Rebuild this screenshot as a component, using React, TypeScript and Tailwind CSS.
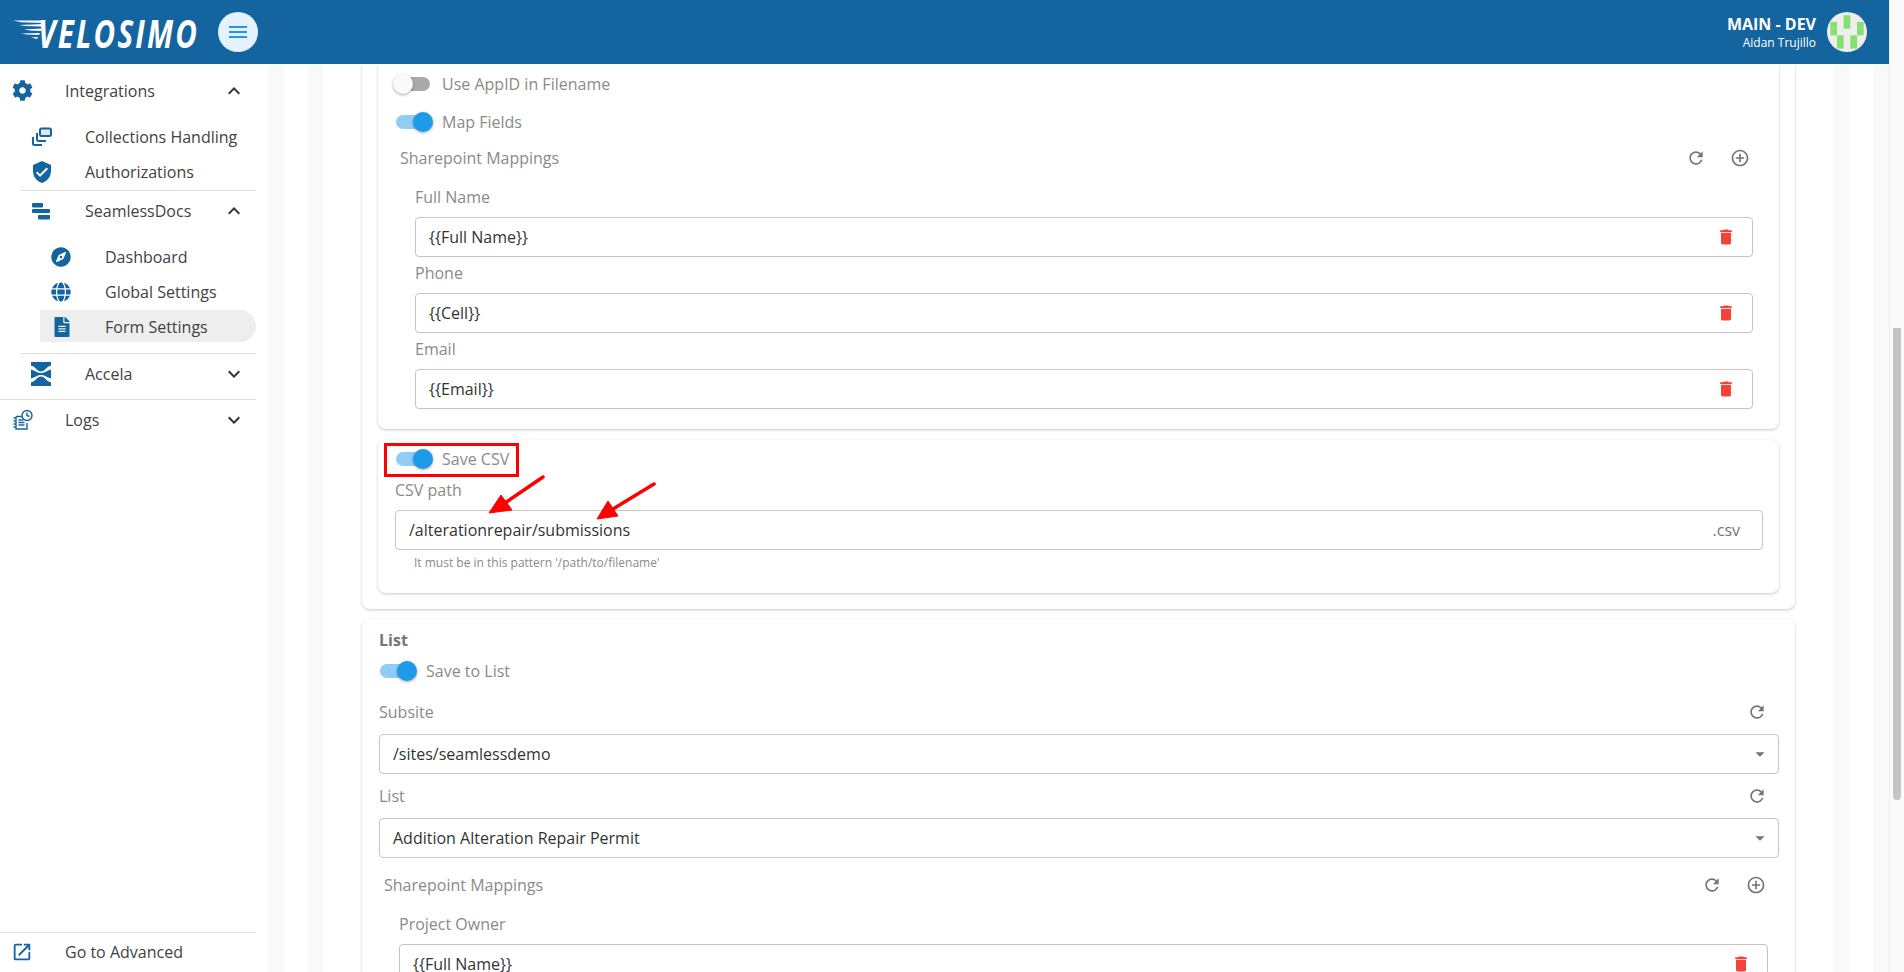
import type { ReactNode } from "react";
import { FaCog, FaCompass, FaFileAlt, FaGlobe } from "react-icons/fa";
import {
  MdAddCircleOutline,
  MdArrowDropDown,
  MdDelete,
  MdExpandLess,
  MdExpandMore,
  MdMenu,
  MdOpenInNew,
  MdRefresh,
  MdVerifiedUser,
} from "react-icons/md";

const blue = "text-[#14659f]";

function CollectionsIcon() {
  return (
    <svg width="22" height="20" viewBox="0 0 22 20" fill="none" stroke="currentColor" strokeWidth="2">
      <rect x="9" y="1.500" width="11" height="7.500" rx="1.500" fill="currentColor" fillOpacity="0.15" />
      <path d="M6 6v6.500a1.500 1.500 0 0 0 1.500 1.500H15" />
      <path d="M2 10v6.500A1.500 1.500 0 0 0 3.500 18H11" />
    </svg>
  );
}

function SeamlessIcon() {
  return (
    <svg width="20" height="20" viewBox="0 0 20 20" fill="currentColor">
      <rect x="1" y="2" width="11" height="4.500" rx="1" />
      <rect x="1" y="8" width="18" height="4" rx="1" />
      <rect x="7" y="14" width="12" height="4.500" rx="1" />
    </svg>
  );
}

function AccelaIcon() {
  return (
    <svg width="20" height="24" viewBox="0 0 20 24">
      <rect width="20" height="24" fill="currentColor" />
      <path d="M0 3.500C5 5 6 9.500 10 9.500S15 5 20 3.500V7.500C16 8.500 14 11 10 11S4 8.500 0 7.500z" fill="white" />
      <path d="M0 20.500C5 19 6 14.500 10 14.500S15 19 20 20.500V16.500C16 15.500 14 13 10 13S4 15.500 0 16.500z" fill="white" />
    </svg>
  );
}

function LogsIcon() {
  return (
    <svg width="22" height="22" viewBox="0 0 22 22" fill="none" stroke="currentColor" strokeWidth="1.400">
      <path d="M4 7.500h9M4 7.500v12.500h11v-6" />
      <path d="M6.500 11h5M6.500 13.500h6M6.500 16h6" />
      <path d="M1.500 9h2.500M1.500 12h2.500M1.500 15h2.500M1.500 18h2.500" />
      <circle cx="15" cy="6.500" r="5" fill="white" />
      <path d="M15 3.500v3l2.500 1" />
    </svg>
  );
}

function Avatar() {
  const cells = [
    [0, 1], [0, 2], [2, 0], [2, 1], [1, 3], [1, 4], [3, 3], [3, 4], [4, 1], [4, 2],
  ];
  return (
    <svg width="40" height="40" viewBox="0 0 40 40" className="rounded-full bg-[#eeeeee]">
      {cells.map(([c, r]) => (
        <rect key={`${c}-${r}`} x={3.3 + c * 6.67} y={3.3 + r * 6.67} width="6.700" height="6.700" fill="#84e070" />
      ))}
    </svg>
  );
}

function Logo() {
  return (
    <div className="flex items-center w-[198px] h-[64px] pl-[12px] relative">
      <svg width="36" height="26" viewBox="0 0 36 26" className="absolute left-[13px] top-[20px]" fill="white">
        <path d="M0 0.500 L33 0.500 L31 3 L8 2.200z" />
        <path d="M6 5 L31 4 L30 6.500 L12 6z" />
        <path d="M11 9.500 L29 8.500 L28 11 L17 10.500z" />
        <path d="M8 13.500 L27 13 L26 15 L14 14.500z" />
        <path d="M18 17.500 L25 17 L24 19z" />
      </svg>
      <span className="ml-[26px] text-white font-bold italic text-[39px] leading-none tracking-[0.075em] origin-left scale-x-[0.76] whitespace-nowrap font-['Open_Sans',sans-serif]">
        VELOSIMO
      </span>
    </div>
  );
}

function NavRow({
  icon,
  label,
  depth,
  chevron,
  active,
}: {
  icon: ReactNode;
  label: string;
  depth: 0 | 1 | 2;
  chevron?: "up" | "down";
  active?: boolean;
}) {
  const iconBox = depth === 0 ? "pl-[12px] w-[65px]" : depth === 1 ? "pl-[31px] w-[85px]" : "pl-[51px] w-[105px]";
  return (
    <div className="relative h-[35px] flex items-center pr-[10px]">
      {active && <div className="absolute left-[40px] right-0 top-[1px] bottom-[2px] rounded-r-full bg-[#eeeeee]" />}
      <div className={`relative shrink-0 flex items-center ${blue} ${iconBox}`}>{icon}</div>
      <span className="relative flex-1 text-[16px] text-[#424242] whitespace-nowrap">{label}</span>
      {chevron === "up" && <MdExpandLess size={24} className="relative text-[#333]" />}
      {chevron === "down" && <MdExpandMore size={24} className="relative text-[#333]" />}
    </div>
  );
}

function Sidebar() {
  return (
    <aside className="w-[268px] shrink-0 bg-white flex flex-col">
      <div className="w-[256px] flex flex-col flex-1 pt-[9px]">
        <NavRow depth={0} icon={<FaCog size={21} />} label="Integrations" chevron="up" />
        <div className="h-[11px]" />
        <NavRow depth={1} icon={<CollectionsIcon />} label="Collections Handling" />
        <NavRow depth={1} icon={<MdVerifiedUser size={24} className="-ml-[1px]" />} label="Authorizations" />
        <div className="h-[1px] ml-[20px] mt-[1px] mb-[2px] bg-[#e0e0e0]" />
        <NavRow depth={1} icon={<SeamlessIcon />} label="SeamlessDocs" chevron="up" />
        <div className="h-[11px]" />
        <NavRow depth={2} icon={<FaCompass size={20} />} label="Dashboard" />
        <NavRow depth={2} icon={<FaGlobe size={20} />} label="Global Settings" />
        <NavRow depth={2} icon={<FaFileAlt size={20} className="ml-[1px]" />} label="Form Settings" active />
        <div className="h-[1px] ml-[20px] mt-[9px] mb-[2px] bg-[#e0e0e0]" />
        <NavRow depth={1} icon={<AccelaIcon />} label="Accela" chevron="down" />
        <div className="h-[1px] mt-[8px] mb-[2px] bg-[#e0e0e0]" />
        <NavRow depth={0} icon={<LogsIcon />} label="Logs" chevron="down" />
        <div className="mt-auto h-[1px] bg-[#e0e0e0]" />
        <div className="h-[1px]" />
        <NavRow depth={0} icon={<MdOpenInNew size={22} className="-ml-[1px]" />} label="Go to Advanced" />
        <div className="h-[3px]" />
      </div>
    </aside>
  );
}

function Toggle({ on, label }: { on: boolean; label: string }) {
  return (
    <div className="flex items-center h-[38px]">
      <div className="relative w-[58px] h-[38px] shrink-0">
        <div className={`absolute left-[12px] top-[12px] w-[34px] h-[14px] rounded-full ${on ? "bg-[#90cdf4]" : "bg-[#aaaaaa]"}`} />
        <div
          className={`absolute top-[9px] w-[20px] h-[20px] rounded-full shadow-[0_1px_3px_rgba(0,0,0,0.35)] ${
            on ? "left-[29px] bg-[#1e9be8]" : "left-[9px] bg-[#fafafa]"
          }`}
        />
      </div>
      <span className="text-[16px] text-[#8a8a8a] -mt-[1px]">{label}</span>
    </div>
  );
}

function FieldBox({ children, className = "" }: { children: ReactNode; className?: string }) {
  return (
    <div className={`h-[40px] flex items-center justify-between border border-[#c4c4c4] rounded-[4px] text-[16px] text-[#333] ${className}`}>
      {children}
    </div>
  );
}

function Mapping({ label, value }: { label: string; value: string }) {
  return (
    <div className="mb-[4px]">
      <div className="h-[24px] mb-[8px] flex items-center text-[16px] text-[#8a8a8a]">{label}</div>
      <FieldBox className="pl-[13px] pr-[16px]">
        <span>{value}</span>
        <MdDelete size={20} className="text-[#f44336]" />
      </FieldBox>
    </div>
  );
}

function MappingHeader({ className = "" }: { className?: string }) {
  return (
    <div className={`h-[34px] flex items-center justify-between text-[16px] text-[#8a8a8a] ${className}`}>
      <span>Sharepoint Mappings</span>
      <div className="flex items-center gap-[24px] text-[#757575]">
        <MdRefresh size={20} />
        <MdAddCircleOutline size={20} />
      </div>
    </div>
  );
}

function RefreshLabel({ label }: { label: string }) {
  return (
    <div className="h-[24px] mb-[10px] flex items-center justify-between text-[16px] text-[#8a8a8a]">
      <span>{label}</span>
      <MdRefresh size={20} className="text-[#757575] mr-[12px]" />
    </div>
  );
}

function SelectBox({ value }: { value: string }) {
  return (
    <FieldBox className="pl-[13px] pr-[7px] mb-[10px]">
      <span>{value}</span>
      <MdArrowDropDown size={22} className="text-[#757575]" />
    </FieldBox>
  );
}

function Annotations() {
  return (
    <>
      <div className="absolute left-[384px] top-[443px] w-[135px] h-[34px] border-[3px] border-[#ff0000]" />
      <svg className="absolute left-0 top-0 pointer-events-none" width="800" height="600" fill="#ff0000" stroke="#ff0000">
        <path d="M543 477 L505 503" strokeWidth="3.500" strokeLinecap="round" />
        <path d="M489 513 L501 495 L512 510z" strokeWidth="1" />
        <path d="M654 484 L613 509" strokeWidth="3.500" strokeLinecap="round" />
        <path d="M597 519 L608 501 L618 516z" strokeWidth="1" />
      </svg>
    </>
  );
}

export default function App() {
  return (
    <div className="relative h-screen overflow-hidden flex bg-white font-['Open_Sans',sans-serif]">
      <div className="flex-1 min-w-0 flex flex-col">
        <header className="h-[64px] shrink-0 bg-[#14659f] flex items-center justify-between pr-[22px]">
          <div className="flex items-center">
            <Logo />
            <button className="ml-[20px] w-[40px] h-[40px] rounded-full bg-[#e3f2fd] flex items-center justify-center text-[#2196f3]">
              <MdMenu size={24} />
            </button>
          </div>
          <div className="flex items-center gap-[11px]">
            <div className="text-right text-white">
              <div className="text-[16px] font-bold leading-[22px]">MAIN - DEV</div>
              <div className="text-[12px] leading-[16px]">Aidan Trujillo</div>
            </div>
            <Avatar />
          </div>
        </header>
        <div className="flex-1 min-h-0 flex overflow-hidden">
          <Sidebar />
          <div className="flex-1 min-w-0 bg-[#f9f9f9] px-[16px]">
            <div className="h-full bg-white px-[24px]">
              <div className="h-full bg-[#f9f9f9] px-[15px]">
                <main className="h-full bg-white px-[39px] overflow-hidden">
                  <section className="rounded-b-lg bg-white px-[16px] pb-[16px] shadow-[0_1px_3px_rgba(0,0,0,0.22)]">
                    <div className="rounded-b-lg bg-white pl-[6px] pr-[26px] pt-[1px] pb-[16px] shadow-[0_1px_3px_rgba(0,0,0,0.22)]">
                      <Toggle on={false} label="Use AppID in Filename" />
                      <Toggle on label="Map Fields" />
                      <div className="pl-[16px]">
                        <MappingHeader className="pr-[3px]" />
                      </div>
                      <div className="pl-[31px] mt-[10px]">
                        <Mapping label="Full Name" value="{{Full Name}}" />
                        <Mapping label="Phone" value="{{Cell}}" />
                        <Mapping label="Email" value="{{Email}}" />
                      </div>
                    </div>
                    <div className="mt-[11px] rounded-lg bg-white pl-[6px] pr-[16px] pb-[23px] shadow-[0_1px_3px_rgba(0,0,0,0.22)]">
                      <Toggle on label="Save CSV" />
                      <div className="pl-[11px]">
                        <div className="h-[24px] mb-[8px] flex items-center text-[16px] text-[#8a8a8a]">CSV path</div>
                        <FieldBox className="pl-[13px] pr-[22px]">
                          <span>/alterationrepair/submissions</span>
                          <span className="text-[#757575]">.csv</span>
                        </FieldBox>
                        <div className="h-[14px] mt-[6px] ml-[19px] flex items-center text-[12px] text-[#8a8a8a]">
                          It must be in this pattern '/path/to/filename'
                        </div>
                      </div>
                    </div>
                  </section>
                  <section className="mt-[10px] rounded-t-lg bg-white pt-[10px] pl-[17px] pr-[16px] shadow-[0_1px_3px_rgba(0,0,0,0.22)]">
                    <div className="h-[22px] flex items-center text-[16px] font-bold text-[#757575]">List</div>
                    <div className="-ml-[11px] mt-[1px] mb-[10px]">
                      <Toggle on label="Save to List" />
                    </div>
                    <RefreshLabel label="Subsite" />
                    <SelectBox value="/sites/seamlessdemo" />
                    <RefreshLabel label="List" />
                    <SelectBox value="Addition Alteration Repair Permit" />
                    <div className="pl-[5px] pr-[13px]">
                      <MappingHeader />
                    </div>
                    <div className="pl-[20px] pr-[11px] mt-[10px]">
                      <Mapping label="Project Owner" value="{{Full Name}}" />
                    </div>
                  </section>
                </main>
              </div>
            </div>
          </div>
        </div>
      </div>
      <div className="w-[15px] shrink-0 bg-[#fafafa] border-l border-[#ececec] pt-[328px] pl-[3px]">
        <div className="w-[8px] h-[472px] rounded-b-full bg-[#c4c4c4]" />
      </div>
      <Annotations />
    </div>
  );
}
